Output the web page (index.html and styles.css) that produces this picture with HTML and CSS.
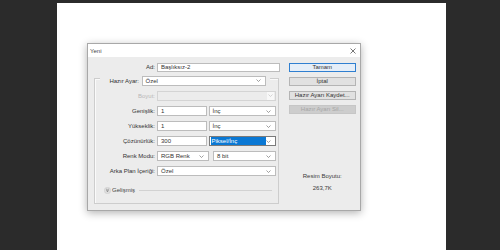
FILE: index.html
```html
<!DOCTYPE html>
<html lang="tr">
<head>
    <meta charset="UTF-8">
    <title>Yeni</title>
    <link rel="stylesheet" href="styles.css">
</head>
<body>
    <div class="workspace">
        <div class="canvas">
            <div class="dialog">
                <div class="title-bar">
                    <span class="title">Yeni</span>
                    <svg class="close" width="6" height="6" viewBox="0 0 6 6"><path d="M0.5 0.5L5.5 5.5M5.5 0.5L0.5 5.5" stroke="#555" stroke-width="0.8"/></svg>
                </div>
                <div class="dialog-body">
                    <div class="form">
                        <div class="ad-row">
                            <label class="label ad-label">Ad:</label>
                            <div class="field ad-field">Başlıksız-2</div>
                        </div>

                        <div class="group">
                            <div class="group-head">
                                <label class="label head-label">Hazır Ayar:</label>
                                <div class="field select head-select">Özel<svg class="chev" width="5" height="3" viewBox="0 0 5 3"><path d="M0.5 0.5L2.5 2.5L4.5 0.5" fill="none" stroke="#777" stroke-width="0.7"/></svg></div>
                            </div>

                            <div class="row row-size">
                                <label class="label disabled">Boyut:</label>
                                <div class="field select select-disabled"><span class="chev-box"><svg width="5" height="3" viewBox="0 0 5 3"><path d="M0.5 0.5L2.5 2.5L4.5 0.5" fill="none" stroke="#c4c4c4" stroke-width="0.7"/></svg></span></div>
                            </div>

                            <div class="row">
                                <label class="label">Genişlik:</label>
                                <div class="pair">
                                    <div class="field num">1</div>
                                    <div class="field select unit">İnç<svg class="chev" width="5" height="3" viewBox="0 0 5 3"><path d="M0.5 0.5L2.5 2.5L4.5 0.5" fill="none" stroke="#777" stroke-width="0.7"/></svg></div>
                                </div>
                            </div>

                            <div class="row">
                                <label class="label">Yükseklik:</label>
                                <div class="pair">
                                    <div class="field num">1</div>
                                    <div class="field select unit">İnç<svg class="chev" width="5" height="3" viewBox="0 0 5 3"><path d="M0.5 0.5L2.5 2.5L4.5 0.5" fill="none" stroke="#777" stroke-width="0.7"/></svg></div>
                                </div>
                            </div>

                            <div class="row">
                                <label class="label">Çözünürlük:</label>
                                <div class="pair">
                                    <div class="field num">300</div>
                                    <div class="field select unit focused"><span class="highlight">Piksel/İnç</span><svg class="chev" width="5" height="3" viewBox="0 0 5 3"><path d="M0.5 0.5L2.5 2.5L4.5 0.5" fill="none" stroke="#777" stroke-width="0.7"/></svg></div>
                                </div>
                            </div>

                            <div class="row">
                                <label class="label">Renk Modu:</label>
                                <div class="pair pair-mode">
                                    <div class="field select mode">RGB Renk<svg class="chev" width="5" height="3" viewBox="0 0 5 3"><path d="M0.5 0.5L2.5 2.5L4.5 0.5" fill="none" stroke="#777" stroke-width="0.7"/></svg></div>
                                    <div class="field select bits">8 bit<svg class="chev" width="5" height="3" viewBox="0 0 5 3"><path d="M0.5 0.5L2.5 2.5L4.5 0.5" fill="none" stroke="#777" stroke-width="0.7"/></svg></div>
                                </div>
                            </div>

                            <div class="row">
                                <label class="label">Arka Plan İçeriği:</label>
                                <div class="field select">Özel<svg class="chev" width="5" height="3" viewBox="0 0 5 3"><path d="M0.5 0.5L2.5 2.5L4.5 0.5" fill="none" stroke="#777" stroke-width="0.7"/></svg></div>
                            </div>

                            <div class="advanced">
                                <svg class="adv-icon" width="7" height="7" viewBox="0 0 7 7">
                                    <circle cx="3.5" cy="3.5" r="3.2" fill="#dedede" stroke="#c8c8c8" stroke-width="0.5"/>
                                    <path d="M2.4 2.2L3.5 3.1L4.6 2.2M2.4 3.6L3.5 4.5L4.6 3.6" fill="none" stroke="#444" stroke-width="0.6"/>
                                </svg>
                                <span class="adv-text">Gelişmiş</span>
                                <span class="adv-line"></span>
                            </div>
                        </div>
                    </div>

                    <div class="actions">
                        <button class="btn btn-default">Tamam</button>
                        <button class="btn">İptal</button>
                        <button class="btn">Hazır Ayarı Kaydet...</button>
                        <button class="btn btn-disabled">Hazır Ayarı Sil...</button>
                        <div class="size-info">
                            <div class="size-title">Resim Boyutu:</div>
                            <div class="size-value">263,7K</div>
                        </div>
                    </div>
                </div>
            </div>
        </div>
    </div>
</body>
</html>
```

FILE: styles.css
```css
* {
    margin: 0;
    padding: 0;
    box-sizing: border-box;
}

body {
    font-family: 'Liberation Sans', Arial, sans-serif;
    font-size: 6px;
    color: #2e2e2e;
    background: #2b2b2b;
    overflow: hidden;
}

.workspace {
    padding: 3px 0 0 57px;
    height: 250px;
}

.canvas {
    width: 389px;
    height: 247px;
    background: #ffffff;
    padding: 40px 0 0 30px;
}

.dialog {
    width: 274px;
    height: 168px;
    background: #ececec;
    border: 1px solid #a8a8a8;
    box-shadow: 0 2px 8px rgba(0, 0, 0, 0.3);
}

.title-bar {
    height: 13px;
    background: #ffffff;
    display: flex;
    align-items: center;
    justify-content: space-between;
    padding: 0 4px 0 2px;
}

.title {
    color: #444;
}

.dialog-body {
    display: flex;
    padding-top: 5.5px;
}

.form {
    width: 194px;
}

.label {
    text-align: right;
    white-space: nowrap;
    color: #333;
}

.label.disabled {
    color: #b8b8b8;
}

.field {
    height: 10px;
    line-height: 8px;
    background: #ffffff;
    border: 1px solid #bcbcbc;
    padding-left: 3px;
    white-space: nowrap;
    color: #333;
}

.select {
    display: flex;
    align-items: center;
    justify-content: space-between;
    padding-right: 4px;
}

.ad-row {
    display: flex;
    align-items: center;
    gap: 2px;
}

.ad-label {
    width: 67px;
}

.ad-field {
    width: 123px;
    height: 9px;
    line-height: 7px;
}

.group {
    margin: 6.5px 0 0 6px;
    width: 185px;
    height: 126px;
    border: 1px solid #cdcdcd;
    box-shadow: inset 1px 1px 0 #fafafa;
}

.group-head {
    display: flex;
    align-items: center;
    gap: 2.5px;
    margin: -3.5px 0 0 5px;
    width: 170px;
    padding-right: 4px;
    background: #ececec;
}

.head-label {
    flex: 1;
}

.head-select {
    width: 124.5px;
    height: 10.5px;
}

.row {
    display: grid;
    grid-template-columns: 60px 118.5px;
    gap: 2px;
    align-items: center;
    margin-top: 5px;
}

.row-size {
    margin-top: 4.5px;
    margin-bottom: 1px;
}

.row-size .field {
    height: 10.5px;
}

.select-disabled {
    background: #ececec;
    border-color: #d4d4d4;
    padding-right: 1px;
    justify-content: flex-end;
}

.chev-box {
    width: 7px;
    height: 7.5px;
    background: #f8f8f8;
    display: flex;
    align-items: center;
    justify-content: center;
}

.pair {
    display: flex;
    gap: 2px;
}

.num {
    width: 49.5px;
}

.unit {
    width: 67px;
}

.focused {
    border-color: #7a7a7a;
    padding-left: 1px;
}

.highlight {
    background: #0a78d4;
    color: #ffffff;
    width: 56px;
    height: 8px;
    padding-left: 1px;
}

.pair-mode {
    gap: 4px;
}

.mode {
    width: 52px;
}

.bits {
    width: 62.5px;
}

.advanced {
    display: flex;
    align-items: center;
    height: 8px;
    margin-top: 10px;
    padding: 0 6.5px 0 8.5px;
}

.adv-text {
    margin-left: 1.5px;
    color: #444;
}

.adv-line {
    flex: 1;
    height: 1px;
    margin-left: 4px;
    background: #d2d2d2;
}

.actions {
    margin-left: 6.5px;
    width: 67.5px;
    display: flex;
    flex-direction: column;
    gap: 5px;
}

.btn {
    height: 9px;
    font-family: inherit;
    font-size: 6px;
    line-height: 7px;
    color: #333;
    background: #e1e1e1;
    border: 1px solid #b4b4b4;
    white-space: nowrap;
}

.btn-default {
    border-color: #2f7fd0;
    background: #e5eef8;
}

.btn-disabled {
    background: #cdcdcd;
    border-color: #c6c6c6;
    color: #a6a6a6;
}

.size-info {
    margin-top: 53px;
    text-align: center;
    line-height: 8px;
    color: #3a3a3a;
}

.size-value {
    margin-top: 4.5px;
}
```
